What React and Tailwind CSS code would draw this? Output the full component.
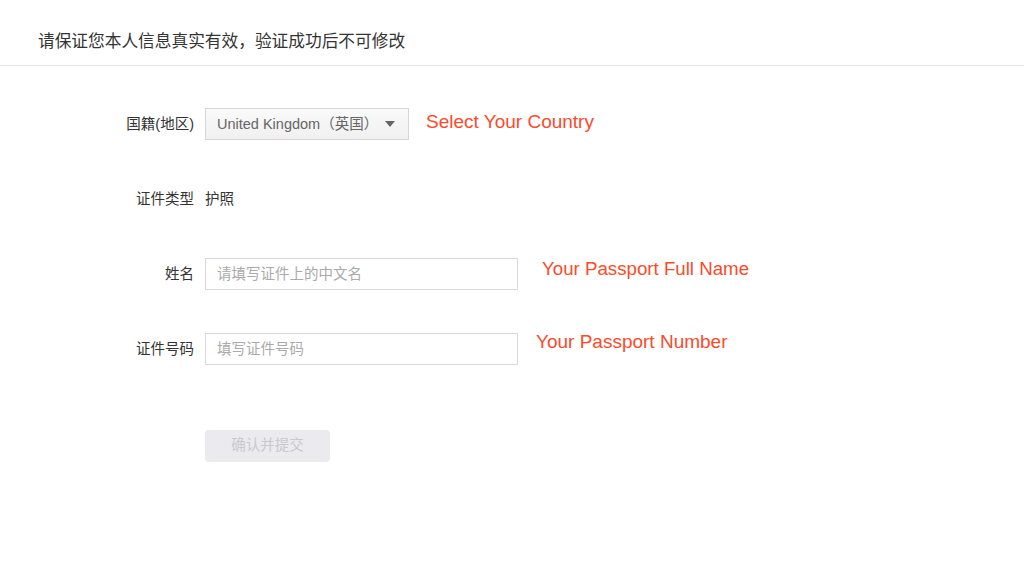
export default function App() {
  const font = { fontFamily: '"Liberation Sans", "Noto Sans CJK SC", sans-serif' };

  return (
    <div className="min-h-screen w-full bg-white text-[14.5px] text-[#333]" style={font}>
      {/* Header */}
      <div className="h-[66px] border-b border-[#e8e8e8] pl-[38px] pt-[30px]">
        <p className="text-[16.7px] leading-6 text-[#333]">请保证您本人信息真实有效，验证成功后不可修改</p>
      </div>

      {/* Form */}
      <div className="flex flex-col gap-[43px] pt-[42px]">
        <div className="flex h-8 items-center">
          <label className="w-[194px] pt-[2px] text-right">国籍(地区)</label>
          <div className="ml-[11px] flex h-8 w-[204px] items-center justify-between border border-[#d6d6d6] bg-gradient-to-b from-[#fafafa] to-[#f0f0f0] pl-[11px] pr-[13px] text-[#666]">
            <span className="pt-[1px]">United Kingdom（英国）</span>
            <span className="h-0 w-0 border-x-[5px] border-t-[6px] border-x-transparent border-t-[#666]" />
          </div>
          <span className="relative -top-[2px] ml-[17px] text-[19px] text-[#fc4a2b]">Select Your Country</span>
        </div>

        <div className="flex h-8 items-center">
          <label className="w-[194px] pt-[2px] text-right">证件类型</label>
          <span className="ml-[11px] pt-[2px]">护照</span>
        </div>

        <div className="flex h-8 items-center">
          <label className="w-[194px] pt-[2px] text-right">姓名</label>
          <input
            className="ml-[11px] h-8 w-[313px] border border-[#d9d9d9] px-[11px] outline-none placeholder:text-[#aaa]"
            placeholder="请填写证件上的中文名"
          />
          <span className="relative -top-[5px] ml-[24px] text-[18.7px] text-[#fc4a2b]">Your Passport Full Name</span>
        </div>

        <div className="flex h-8 items-center">
          <label className="w-[194px] pt-[2px] text-right">证件号码</label>
          <input
            className="ml-[11px] h-8 w-[313px] border border-[#d9d9d9] px-[11px] outline-none placeholder:text-[#aaa]"
            placeholder="填写证件号码"
          />
          <span className="relative -top-[7px] ml-[18px] text-[19px] text-[#fc4a2b]">Your Passport Number</span>
        </div>

        <div className="mt-[22px] pl-[205px]">
          <button className="h-8 w-[125px] rounded-[4px] bg-[#ebebef] text-[#c9c9cd]" disabled>
            确认并提交
          </button>
        </div>
      </div>
    </div>
  );
}
